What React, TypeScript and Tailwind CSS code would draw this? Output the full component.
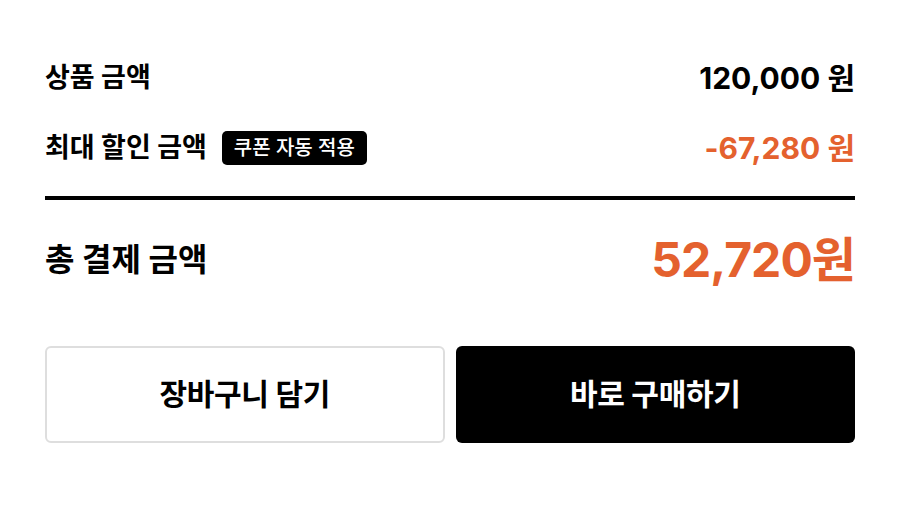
import { useState } from 'react';

const FONT = "font-['Inter','Noto_Sans_CJK_KR',sans-serif]";

const won = (n: number) => n.toLocaleString('ko-KR');

export default function App() {
  const [price] = useState(120000);
  const [discount] = useState(67280);
  const total = price - discount;

  return (
    <div className={`${FONT} min-h-screen bg-white text-black`}>
      <div className="px-[45px] pt-[58px]">
        {/* price summary */}
        <div className="flex h-10 items-center justify-between">
          <span className="text-[27px] font-bold">상품 금액</span>
          <span className="text-[30px] font-bold">{won(price)} 원</span>
        </div>

        <div className="mt-[30px] flex h-10 items-center justify-between">
          <div className="flex items-center gap-[15px]">
            <span className="text-[27px] font-bold">최대 할인 금액</span>
            <span className="flex h-[34px] items-center rounded-[5px] bg-black px-3 text-[20px] font-medium text-white">
              쿠폰 자동 적용
            </span>
          </div>
          <span className="text-[30px] font-bold text-[#e4612e]">-{won(discount)} 원</span>
        </div>

        <div className="mt-[28px] h-[4px] bg-black" />

        <div className="mt-[30px] flex h-[60px] items-center justify-between">
          <span className="text-[32px] font-bold">총 결제 금액</span>
          <span className="text-[48px] font-bold tracking-[-0.02em] text-[#e4612e]">
            {won(total)}원
          </span>
        </div>

        {/* actions */}
        <div className="mt-[56px] grid h-[97px] grid-cols-2 gap-[11px]">
          <button className="rounded-[6px] border-2 border-[#dedede] bg-white text-[30px] font-bold tracking-[-0.01em] text-black">
            장바구니 담기
          </button>
          <button className="rounded-[6px] bg-black text-[30px] font-bold tracking-[-0.01em] text-white">
            바로 구매하기
          </button>
        </div>
      </div>
    </div>
  );
}
